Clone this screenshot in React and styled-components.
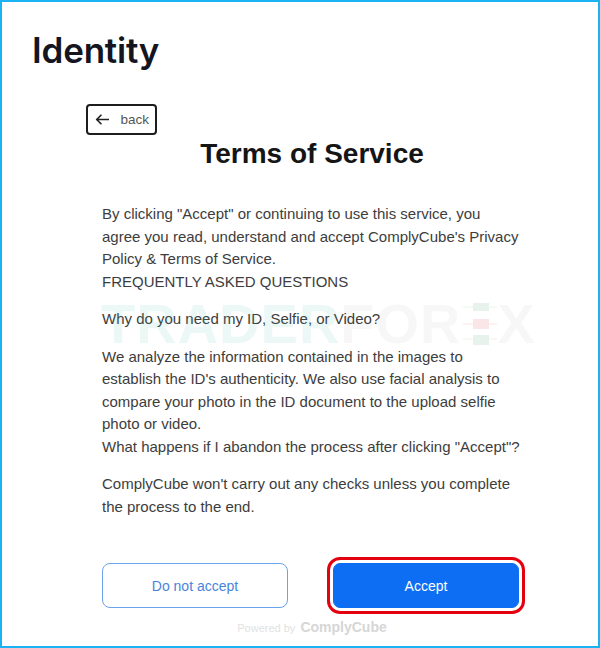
import React from "react";
import styled, { createGlobalStyle } from "styled-components";

const Global = createGlobalStyle`
  html, body { margin: 0; padding: 0; background: #fff; }
  * { box-sizing: border-box; }
`;

const Frame = styled.div`
  position: relative;
  width: 600px;
  height: 648px;
  border: 2px solid #1cb3f4;
  background: #fff;
  font-family: "Liberation Sans", Arial, sans-serif;
  display: flex;
  flex-direction: column;
  overflow: hidden;
`;

const Title = styled.h1`
  margin: 0;
  padding: 26px 0 0 30px;
  font-family: Inter, "Noto Sans", sans-serif;
  font-weight: 600;
  font-size: 35px;
  line-height: 44px;
  color: #14151f;
  letter-spacing: -0.2px;
`;

const BackRow = styled.div`
  padding: 32px 0 0 84px;
  display: flex;
`;

const BackButton = styled.button`
  display: flex;
  align-items: center;
  gap: 11px;
  width: 71px;
  height: 31px;
  padding: 0 6px 0 7px;
  border: 2px solid #1d1d1d;
  border-radius: 4px;
  background: #fff;
  font-family: "Liberation Sans", Arial, sans-serif;
  font-size: 13.5px;
  color: #555;
  cursor: pointer;
`;

const Content = styled.div`
  width: 420px;
  margin-left: 100px;
  display: flex;
  flex-direction: column;
`;

const Heading = styled.h2`
  margin: 3px 0 0;
  text-align: center;
  font-family: "Liberation Sans", Arial, sans-serif;
  font-weight: 700;
  font-size: 28px;
  line-height: 32px;
  color: #151515;
`;

const Body = styled.div`
  margin-top: 33px;
  font-size: 15px;
  line-height: 22.5px;
  color: #3d3d3d;
`;

const Para = styled.p`
  margin: 0 0 ${(p) => (p.$gap ? "15px" : "0")};
`;

const Actions = styled.div`
  margin-top: 45px;
  display: flex;
  gap: 45px;
`;

const Btn = styled.button`
  width: 186px;
  height: 45px;
  border-radius: 8px;
  font-family: "Liberation Sans", Arial, sans-serif;
  font-size: 14px;
  cursor: pointer;
  border: 1.5px solid ${(p) => (p.$primary ? "#0d6ef3" : "#6aa3ea")};
  background: ${(p) => (p.$primary ? "#0d6ef3" : "#fff")};
  color: ${(p) => (p.$primary ? "#fff" : "#4a84dc")};
  ${(p) =>
    p.$highlight &&
    `outline: 3px solid #e3000f; outline-offset: 3px; border-radius: 7px;`}
`;

const Powered = styled.div`
  margin-top: 11px;
  text-align: center;
  font-size: 11px;
  color: #e2e2e2;
  & b {
    font-size: 14px;
    font-weight: 700;
    color: #d6d6d6;
    margin-left: 5px;
  }
`;

const Watermark = styled.div`
  position: absolute;
  left: 99px;
  top: 294px;
  display: flex;
  align-items: center;
  font-family: "Liberation Sans", Arial, sans-serif;
  font-weight: 700;
  font-size: 56px;
  letter-spacing: 1px;
  pointer-events: none;
  line-height: 1;
`;

const Mark = styled.span`
  color: ${(p) => p.$c};
`;

function ArrowLeft() {
  return (
    <svg width="17" height="13" viewBox="0 0 17 13" fill="none" stroke="#222" strokeWidth="2" strokeLinecap="round" strokeLinejoin="round">
      <path d="M16 6.5H2M7 1.5L2 6.5l5 5" />
    </svg>
  );
}

function Candles() {
  return (
    <svg width="36" height="42" viewBox="0 0 36 42">
      <rect x="11" y="0" width="16" height="8" fill="#e6f2eb" />
      <line x1="1" y1="4" x2="35" y2="4" stroke="#eaf4ee" strokeWidth="1" />
      <rect x="11" y="16" width="16" height="10" fill="#fae6e6" />
      <line x1="1" y1="21" x2="35" y2="21" stroke="#fae6e6" strokeWidth="1" />
      <rect x="11" y="32" width="16" height="10" fill="#e6f2eb" />
      <line x1="1" y1="36" x2="35" y2="36" stroke="#eaf4ee" strokeWidth="1" />
    </svg>
  );
}

export default function App() {
  return (
    <>
      <Global />
      <Frame>
        <Title>Identity</Title>
        <BackRow>
          <BackButton>
            <ArrowLeft />
            back
          </BackButton>
        </BackRow>
        <Content>
          <Heading>Terms of Service</Heading>
          <Body>
            <Para>
              By clicking "Accept" or continuing to use this service, you agree you read, understand and accept ComplyCube's Privacy Policy &amp; Terms of Service.
            </Para>
            <Para $gap>FREQUENTLY ASKED QUESTIONS</Para>
            <Para $gap>Why do you need my ID, Selfie, or Video?</Para>
            <Para>
              We analyze the information contained in the images to establish the ID's authenticity. We also use facial analysis to compare your photo in the ID document to the upload selfie photo or video.
            </Para>
            <Para $gap>What happens if I abandon the process after clicking "Accept"?</Para>
            <Para>ComplyCube won't carry out any checks unless you complete the process to the end.</Para>
          </Body>
          <Actions>
            <Btn>Do not accept</Btn>
            <Btn $primary $highlight>Accept</Btn>
          </Actions>
          <Powered>
            Powered by<b>ComplyCube</b>
          </Powered>
        </Content>
        <Watermark aria-hidden="true">
          <Mark $c="rgba(60,190,160,0.10)">TRADER</Mark>
          <Mark $c="rgba(0,0,0,0.03)">FOR</Mark>
          <Candles />
          <Mark $c="rgba(0,0,0,0.03)">X</Mark>
        </Watermark>
      </Frame>
    </>
  );
}
